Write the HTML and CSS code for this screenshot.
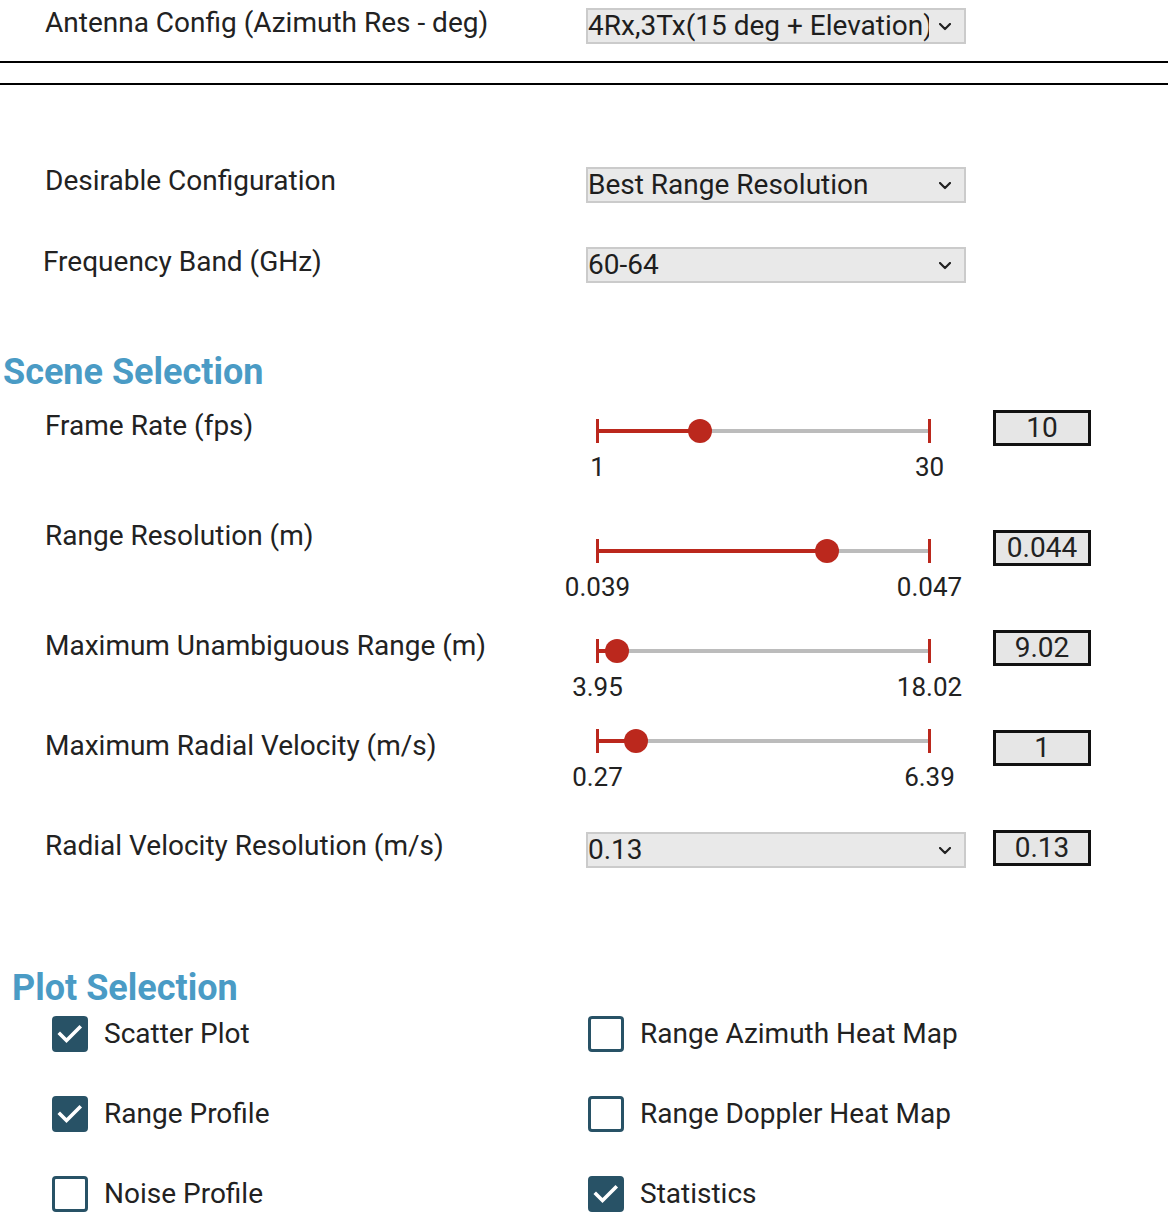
FILE: index.html
```html
<!DOCTYPE html>
<html lang="en">
<head>
<meta charset="utf-8">
<title>Configuration</title>
<link rel="stylesheet" href="styles.css">
</head>
<body>
<div class="row row-top">
  <div class="label">Antenna Config (Azimuth Res - deg)</div>
  <div class="select"><span class="select-text">4Rx,3Tx(15 deg + Elevation)</span><svg class="chev" viewBox="0 0 12 8" width="12" height="8"><polyline points="1,1 6,6 11,1"/></svg></div>
</div>
<hr class="rule rule-1">
<hr class="rule rule-2">

<div class="row row-desirable">
  <div class="label label-sel">Desirable Configuration</div>
  <div class="select"><span class="select-text">Best Range Resolution</span><svg class="chev" viewBox="0 0 12 8" width="12" height="8"><polyline points="1,1 6,6 11,1"/></svg></div>
</div>

<div class="row row-freq">
  <div class="label label-sel label-freq">Frequency Band (GHz)</div>
  <div class="select"><span class="select-text">60-64</span><svg class="chev" viewBox="0 0 12 8" width="12" height="8"><polyline points="1,1 6,6 11,1"/></svg></div>
</div>

<h2 class="heading heading-scene">Scene Selection</h2>

<div class="row row-frame">
  <div class="label label-slider">Frame Rate (fps)</div>
  <div class="slider">
    <div class="track"><div class="fill" style="width:30.7%"></div><span class="thumb" style="left:30.7%"></span></div>
    <div class="scale"><span class="mark"><span>1</span></span><span class="mark"><span>30</span></span></div>
  </div>
  <div class="value">10</div>
</div>

<div class="row row-range">
  <div class="label label-slider label-range">Range Resolution (m)</div>
  <div class="slider">
    <div class="track"><div class="fill" style="width:69.3%"></div><span class="thumb" style="left:69.3%"></span></div>
    <div class="scale"><span class="mark"><span>0.039</span></span><span class="mark"><span>0.047</span></span></div>
  </div>
  <div class="value">0.044</div>
</div>

<div class="row row-max">
  <div class="label label-slider">Maximum Unambiguous Range (m)</div>
  <div class="slider">
    <div class="track"><div class="fill" style="width:5.5%"></div><span class="thumb" style="left:5.5%"></span></div>
    <div class="scale"><span class="mark"><span>3.95</span></span><span class="mark"><span>18.02</span></span></div>
  </div>
  <div class="value">9.02</div>
</div>

<div class="row row-vel">
  <div class="label label-slider">Maximum Radial Velocity (m/s)</div>
  <div class="slider slider-high">
    <div class="track"><div class="fill" style="width:11.2%"></div><span class="thumb" style="left:11.2%"></span></div>
    <div class="scale"><span class="mark"><span>0.27</span></span><span class="mark"><span>6.39</span></span></div>
  </div>
  <div class="value">1</div>
</div>

<div class="row row-radial">
  <div class="label label-slider">Radial Velocity Resolution (m/s)</div>
  <div class="select select-low"><span class="select-text">0.13</span><svg class="chev" viewBox="0 0 12 8" width="12" height="8"><polyline points="1,1 6,6 11,1"/></svg></div>
  <div class="value">0.13</div>
</div>

<h2 class="heading heading-plot">Plot Selection</h2>

<div class="checks">
  <label class="check"><span class="box checked"><svg viewBox="0 0 30 30" width="30" height="30"><polyline points="5,15 11.5,21.5 24.5,8.5"/></svg></span><span class="check-text">Scatter Plot</span></label>
  <label class="check"><span class="box"></span><span class="check-text">Range Azimuth Heat Map</span></label>
  <label class="check"><span class="box checked"><svg viewBox="0 0 30 30" width="30" height="30"><polyline points="5,15 11.5,21.5 24.5,8.5"/></svg></span><span class="check-text">Range Profile</span></label>
  <label class="check"><span class="box"></span><span class="check-text">Range Doppler Heat Map</span></label>
  <label class="check"><span class="box"></span><span class="check-text">Noise Profile</span></label>
  <label class="check"><span class="box checked"><svg viewBox="0 0 30 30" width="30" height="30"><polyline points="5,15 11.5,21.5 24.5,8.5"/></svg></span><span class="check-text">Statistics</span></label>
</div>
</body>
</html>
```

FILE: styles.css
```css
html, body {
  margin: 0;
  padding: 0;
  background: #ffffff;
}

body {
  font-family: Roboto, "Liberation Sans", sans-serif;
  color: #222222;
  width: 1168px;
}

.row {
  display: flex;
  align-items: flex-start;
}

.label {
  width: 586px;
  box-sizing: border-box;
  padding-left: 45px;
  font-size: 28px;
  line-height: 34px;
  margin-top: -2px;
  white-space: nowrap;
}

.label-sel {
  margin-top: -3px;
}

.label-freq {
  padding-left: 43px;
  margin-top: -2px;
}

.label-slider {
  margin-top: -1px;
}

.label-range {
  margin-top: -11px;
}

/* select boxes */
.select {
  width: 380px;
  height: 36px;
  box-sizing: border-box;
  border: 2px solid #cbcbcb;
  background: #e9e9e9;
  display: flex;
  align-items: center;
  padding: 0 13px 0 0;
  font-size: 28px;
  line-height: 32px;
  color: #1e1e1e;
}

.select-text {
  flex: 1;
  min-width: 0;
  overflow: hidden;
  white-space: nowrap;
}

.chev {
  flex: none;
  margin-left: 10px;
  margin-top: 2px;
}

.chev polyline {
  fill: none;
  stroke: #222;
  stroke-width: 2.2;
  stroke-linecap: round;
  stroke-linejoin: round;
}

.select-low {
  margin-top: 2px;
}

/* section positions */
.row-top {
  padding-top: 8px;
}

.rule {
  border: 0;
  height: 2px;
  background: #000;
  margin: 0;
}

.rule-1 {
  margin-top: 17px;
}

.rule-2 {
  margin-top: 20px;
}

.row-desirable {
  margin-top: 82px;
}

.row-freq {
  margin-top: 44px;
}

.heading {
  margin: 0;
  font-size: 36px;
  line-height: 42px;
  font-weight: 700;
  color: #4a9bc5;
}

.heading-scene {
  margin-top: 68px;
  margin-bottom: -1px;
  padding-left: 3px;
}

.row-frame {
  margin-top: 18px;
}

.row-range {
  margin-top: 49px;
}

.row-max {
  margin-top: 29px;
}

.row-vel {
  margin-top: 29px;
}

.row-radial {
  margin-top: 39px;
}

.heading-plot {
  margin-top: 99px;
  margin-bottom: -2px;
  padding-left: 12px;
}

/* sliders */
.slider {
  width: 380px;
  box-sizing: border-box;
  padding: 9px 35px 0 10px;
}

.slider-high {
  padding-top: 0;
  margin-top: -1px;
}

.track {
  position: relative;
  height: 24px;
  border-left: 3px solid #bb281d;
  border-right: 3px solid #bb281d;
}

.track::before {
  content: "";
  display: block;
  position: absolute;
  left: 0;
  right: 0;
  top: 10px;
  height: 4px;
  background: #bcbcbc;
}

.fill {
  position: absolute;
  left: 0;
  top: 10px;
  height: 4px;
  background: #bb281d;
}

.thumb {
  position: absolute;
  top: 0;
  width: 24px;
  height: 24px;
  border-radius: 50%;
  background: #bb281d;
  transform: translateX(-50%);
}

.scale {
  display: flex;
  justify-content: space-between;
  padding: 0 1.5px;
  margin-top: 10px;
  font-size: 26px;
  line-height: 28px;
  color: #222;
}

.mark {
  width: 0;
  display: flex;
  justify-content: center;
  white-space: nowrap;
}

/* value boxes */
.value {
  width: 98px;
  height: 36px;
  box-sizing: border-box;
  margin-left: 27px;
  border: 3px solid #111;
  background: #e6e6e6;
  text-align: center;
  font-size: 28px;
  line-height: 30px;
  color: #222;
}

/* checkboxes */
.checks {
  margin-top: 9px;
  padding-left: 52px;
  display: grid;
  grid-template-columns: 536px 1fr;
  row-gap: 44px;
}

.check {
  display: flex;
  align-items: center;
  height: 36px;
}

.box {
  width: 36px;
  height: 36px;
  box-sizing: border-box;
  border: 3px solid #285266;
  border-radius: 4px;
  flex: none;
  display: flex;
  align-items: center;
  justify-content: center;
}

.box.checked {
  background: #285266;
}

.box svg polyline {
  fill: none;
  stroke: #ffffff;
  stroke-width: 3.6;
  stroke-linecap: square;
  stroke-linejoin: miter;
}

.check-text {
  margin-left: 16px;
  font-size: 28px;
  line-height: 36px;
  white-space: nowrap;
}
```
